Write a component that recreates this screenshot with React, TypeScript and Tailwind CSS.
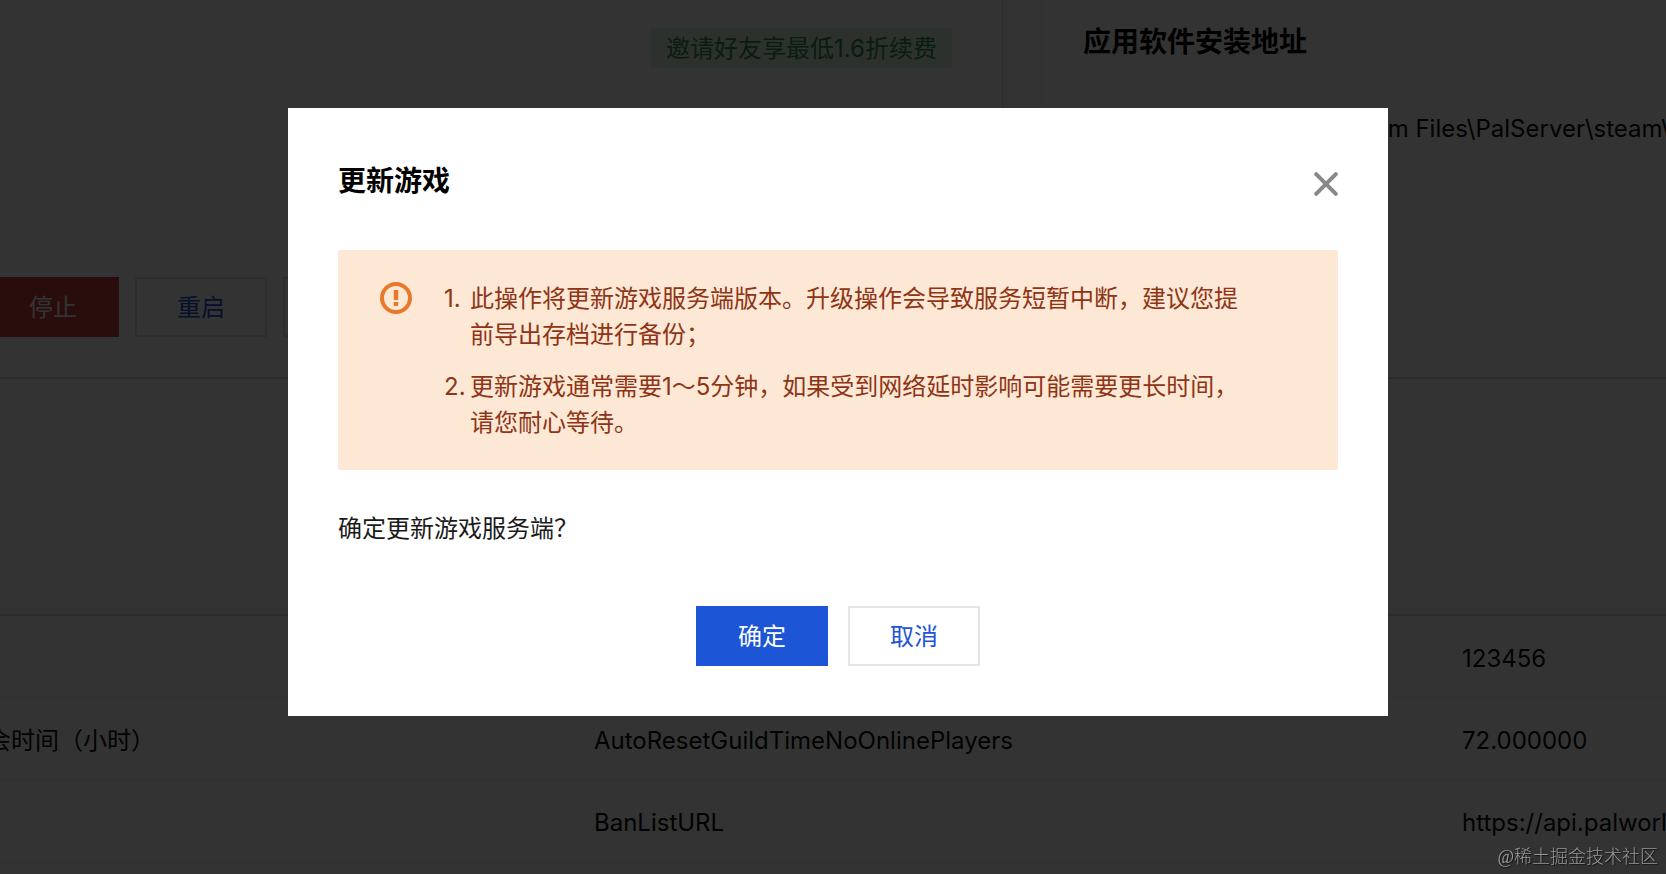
import React from "react";

const settings = [
  { label: "", key: "", value: "123456" },
  { label: "会时间（小时）", key: "AutoResetGuildTimeNoOnlinePlayers", value: "72.000000" },
  { label: "", key: "BanListURL", value: "https://api.palworldgame.com/api/banlist.txt" },
];

const notices = [
  "此操作将更新游戏服务端版本。升级操作会导致服务短暂中断，建议您提前导出存档进行备份；",
  "更新游戏通常需要1～5分钟，如果受到网络延时影响可能需要更长时间，请您耐心等待。",
];

function ServerPage() {
  return (
    <main className="-ml-[13px] h-screen overflow-hidden bg-[#fafafa] text-[#0a0a0a]">
      <div className="flex h-[379px] gap-10">
        <section className="flex w-[1016px] shrink-0 flex-col justify-between border-r border-b-2 border-[#dcdcdc] bg-white pt-7 pb-10">
          <div className="flex justify-end pr-[50px]">
            <a href="#invite" className="bg-[#e0f2e3] px-[15px] pt-0.5 leading-[38px] text-[#2f8f47]">
              邀请好友享最低1.6折续费
            </a>
          </div>
          <div className="flex gap-4">
            <button type="button" className="h-[60px] w-[132px] shrink-0 bg-[#cc3f3f] pt-0.5 text-white">停止</button>
            <button type="button" className="h-[60px] w-[132px] shrink-0 border-2 border-[#e2e2e2] pt-0.5 text-[#1c55d6]">重启</button>
            <button type="button" className="h-[60px] w-[132px] shrink-0 border-2 border-[#e2e2e2] pt-0.5 text-[#1c55d6]">更新</button>
          </div>
        </section>
        <section className="min-w-0 grow overflow-hidden border-b-2 border-[#dcdcdc] bg-white pt-[21px] pl-10">
          <h2 className="text-[28px] leading-[42px] font-bold text-black">应用软件安装地址</h2>
          <p className="mt-12 pl-[196px] leading-9 whitespace-nowrap">
            C:\Program Files\PalServer\steam\steamapps
          </p>
        </section>
      </div>
      <table className="mt-[235px] w-full table-fixed border-t-2 border-[#d6d6d6] bg-white text-left">
        <colgroup>
          <col className="w-[607px]" />
          <col className="w-[868px]" />
          <col />
        </colgroup>
        <tbody>
          {settings.map((row) => (
            <tr key={row.value} className="h-[82px] border-b border-[#f0f0f0]">
              <td className="pt-1.5">{row.label}</td>
              <td className="pt-1.5">{row.key}</td>
              <td className="overflow-hidden pt-1.5 whitespace-nowrap">{row.value}</td>
            </tr>
          ))}
        </tbody>
      </table>
    </main>
  );
}

function UpdateDialog() {
  return (
    <div className="fixed inset-0 flex items-start justify-center bg-black/80 pt-[108px] pl-[10px]">
      <div role="dialog" aria-modal="true" aria-labelledby="dialog-title" className="w-full max-w-[1100px] bg-white px-[50px] pt-[50px] pb-[50px]">
        <header className="flex h-11 items-center justify-between">
          <h1 id="dialog-title" className="pt-0.5 text-[28px] leading-[44px] font-bold text-black">更新游戏</h1>
          <button type="button" aria-label="关闭" className="pt-2">
            <svg width="24" height="24" viewBox="0 0 24 24" fill="none" stroke="#888888" strokeWidth="4" strokeLinecap="round">
              <path d="M2.2 2.2 21.8 21.8M21.8 2.2 2.2 21.8" />
            </svg>
          </button>
        </header>
        <div className="mt-12 flex rounded-xs bg-[#fce8d5] pt-[31px] pr-[90px] pb-[29px] pl-[42px] text-[#8f3415]">
          <svg className="mt-px shrink-0" width="32" height="32" viewBox="0 0 32 32" fill="none">
            <circle cx="16" cy="16" r="14" stroke="#e8792b" strokeWidth="4" />
            <path d="M16 8v10M16 20v4" stroke="#e8792b" strokeWidth="4.4" />
          </svg>
          <ol className="ml-8 flex flex-col gap-4">
            {notices.map((text, i) => (
              <li key={i} className="flex leading-9">
                <span className="w-[26px] shrink-0">{i + 1}.</span>
                <span>{text}</span>
              </li>
            ))}
          </ol>
        </div>
        <p className="mt-[41px] leading-9 text-[#1a1a1a]">确定更新游戏服务端？</p>
        <div className="mt-[59px] flex justify-center gap-5">
          <button type="button" className="h-[60px] w-[132px] bg-[#1c55d6] pt-0.5 text-white">确定</button>
          <button type="button" className="h-[60px] w-[132px] border-2 border-[#e5e5e5] bg-white pt-0.5 text-[#1c55d6]">取消</button>
        </div>
      </div>
    </div>
  );
}

export default function App() {
  return (
    <div className="overflow-hidden font-['Inter','Noto_Sans_CJK_SC',sans-serif] text-[24px]">
      <ServerPage />
      <UpdateDialog />
      <div className="fixed right-2 bottom-0.5 font-['Liberation_Serif','Noto_Sans_CJK_SC',serif] text-[18px] leading-[30px] font-light text-[#999999] [text-shadow:1px_1px_1px_#111]">
        @稀土掘金技术社区
      </div>
    </div>
  );
}
